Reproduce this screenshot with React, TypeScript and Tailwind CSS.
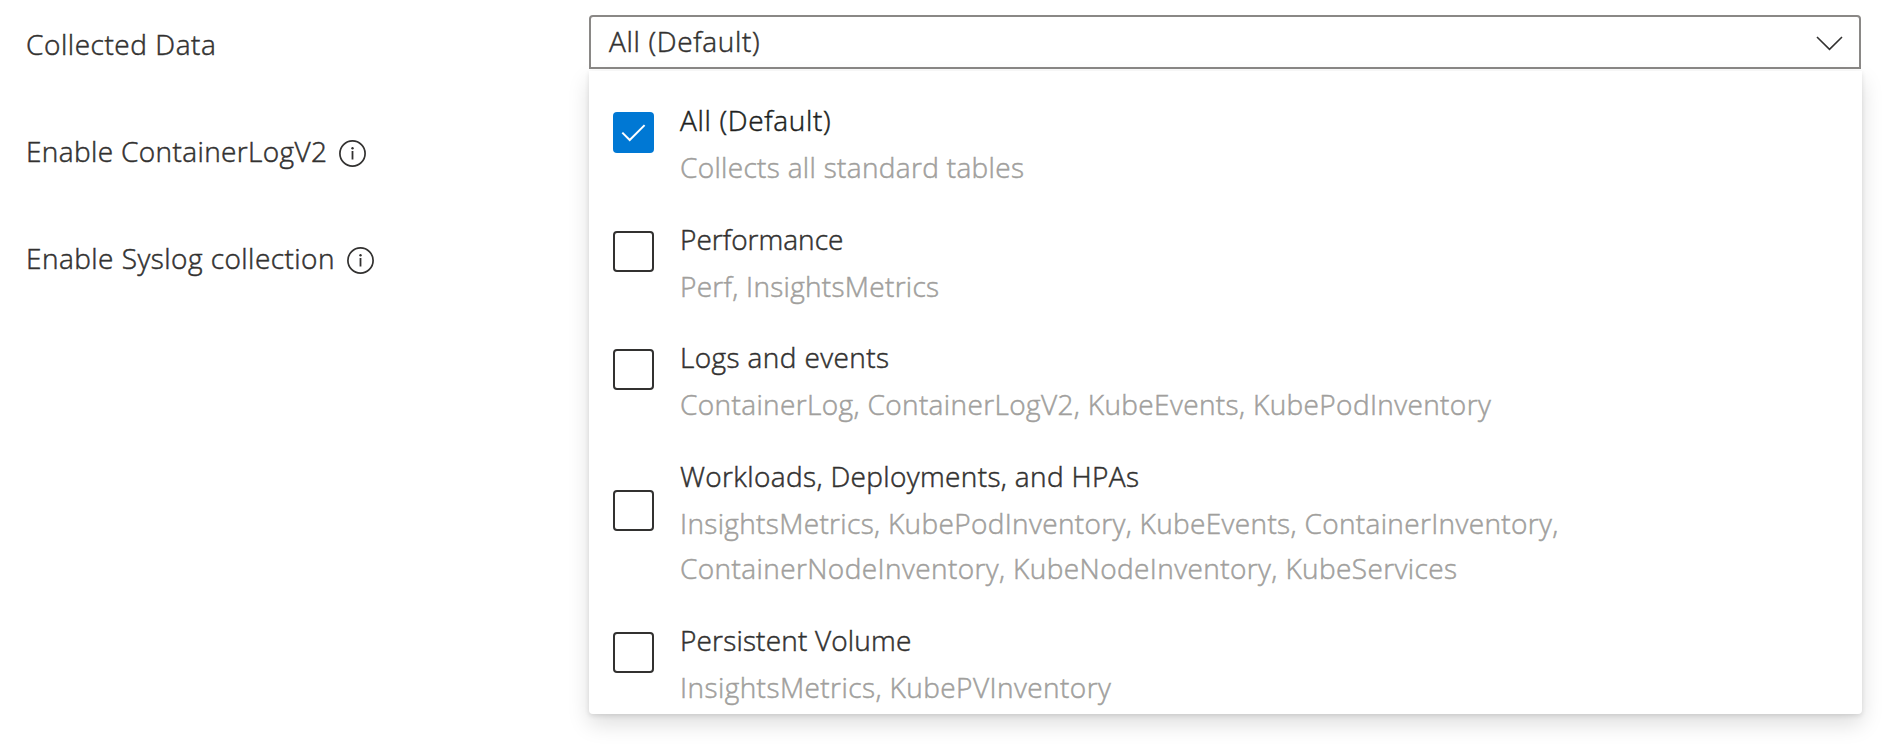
import React from "react";

type Line = { text: string; tracking: string };
type Option = { label: Line; description: Line[]; checked?: boolean };

const options: Option[] = [
  {
    label: { text: "All (Default)", tracking: "tracking-[0.67px]" },
    description: [{ text: "Collects all standard tables", tracking: "tracking-[0.32px]" }],
    checked: true,
  },
  {
    label: { text: "Performance", tracking: "tracking-[0.02px]" },
    description: [{ text: "Perf, InsightsMetrics", tracking: "tracking-[0.29px]" }],
  },
  {
    label: { text: "Logs and events", tracking: "tracking-[0.39px]" },
    description: [
      {
        text: "ContainerLog, ContainerLogV2, KubeEvents, KubePodInventory",
        tracking: "tracking-[0.37px]",
      },
    ],
  },
  {
    label: { text: "Workloads, Deployments, and HPAs", tracking: "tracking-[0.36px]" },
    description: [
      {
        text: "InsightsMetrics, KubePodInventory, KubeEvents, ContainerInventory,",
        tracking: "tracking-[0.34px]",
      },
      {
        text: "ContainerNodeInventory, KubeNodeInventory, KubeServices",
        tracking: "tracking-[0.4px]",
      },
    ],
  },
  {
    label: { text: "Persistent Volume", tracking: "tracking-[0.175px]" },
    description: [{ text: "InsightsMetrics, KubePVInventory", tracking: "tracking-[0.43px]" }],
  },
];

function InfoIcon() {
  return (
    <svg className="mt-[3px] size-[27px] shrink-0" viewBox="0 0 27 27" fill="none">
      <circle cx="13.5" cy="13.5" r="12.6" stroke="#323130" strokeWidth="1.7" />
      <path d="M13.5 11V19.5" stroke="#323130" strokeWidth="1.8" />
      <circle cx="13.5" cy="8.2" r="1.2" fill="#323130" />
    </svg>
  );
}

function FieldLabel({ text, tracking, info }: Line & { info?: boolean }) {
  return (
    <div className="flex h-[45px] items-center gap-3">
      <span className={tracking}>{text}</span>
      {info && <InfoIcon />}
    </div>
  );
}

function Checkbox({ checked }: { checked?: boolean }) {
  if (checked) {
    return (
      <span className="mb-[23px] flex size-[41px] shrink-0 rounded-[4px] bg-[#0078d4]">
        <svg className="size-[41px]" viewBox="0 0 41 41" fill="none">
          <path d="M9.3 20.6L16.7 28L31.6 13.1" stroke="#fff" strokeWidth="2" />
        </svg>
      </span>
    );
  }
  return (
    <span className="mb-[23px] size-[41px] shrink-0 rounded-[4px] border-2 border-[#323130] bg-white" />
  );
}

function OptionRow({ label, description, checked }: Option) {
  return (
    <li className="flex items-center gap-[26px]">
      <Checkbox checked={checked} />
      <div>
        <div className={checked ? "text-[#201f1e]" : "text-[#323130]"}>
          <span className={label.tracking}>{label.text}</span>
        </div>
        <div className="mt-[2px] text-[#a19f9d]">
          {description.map((line) => (
            <div key={line.text} className={line.tracking}>
              {line.text}
            </div>
          ))}
        </div>
      </div>
    </li>
  );
}

export default function App() {
  return (
    <main className="flex h-[751px] w-[1894px] overflow-hidden bg-white font-['Open_Sans',sans-serif] text-[28px] leading-[45px] font-light whitespace-nowrap text-[#323130] [-webkit-text-stroke:0.5px_currentColor]">
      <section className="flex w-[589px] flex-col gap-[62px] pt-[22px] pl-[26px]">
        <FieldLabel text="Collected Data" tracking="tracking-[0.55px]" />
        <FieldLabel text="Enable ContainerLogV2" tracking="tracking-[0.37px]" info />
        <FieldLabel text="Enable Syslog collection" tracking="tracking-[0.46px]" info />
      </section>

      <section className="relative mt-[15px] h-[54px] w-[1272px]">
        <div className="flex h-[54px] items-center justify-between rounded-t-[4px] border-2 border-[#8a8886] pr-[15px] pl-[18px]">
          <span className="-mt-px tracking-[0.67px]">All (Default)</span>
          <svg className="size-[30px]" viewBox="0 0 30 30" fill="none">
            <path d="M3 10L15.5 22.4L28 10" stroke="#323130" strokeWidth="1.6" />
          </svg>
        </div>
        <ul className="absolute top-[56px] left-0 flex h-[643px] w-[1273px] flex-col gap-[26.67px] rounded-b-[4px] bg-white pt-[26.9px] pl-[24px] shadow-[0_10px_22px_rgba(0,0,0,0.132),0_2px_5px_rgba(0,0,0,0.108)]">
          {options.map((option) => (
            <OptionRow key={option.label.text} {...option} />
          ))}
        </ul>
      </section>
    </main>
  );
}
